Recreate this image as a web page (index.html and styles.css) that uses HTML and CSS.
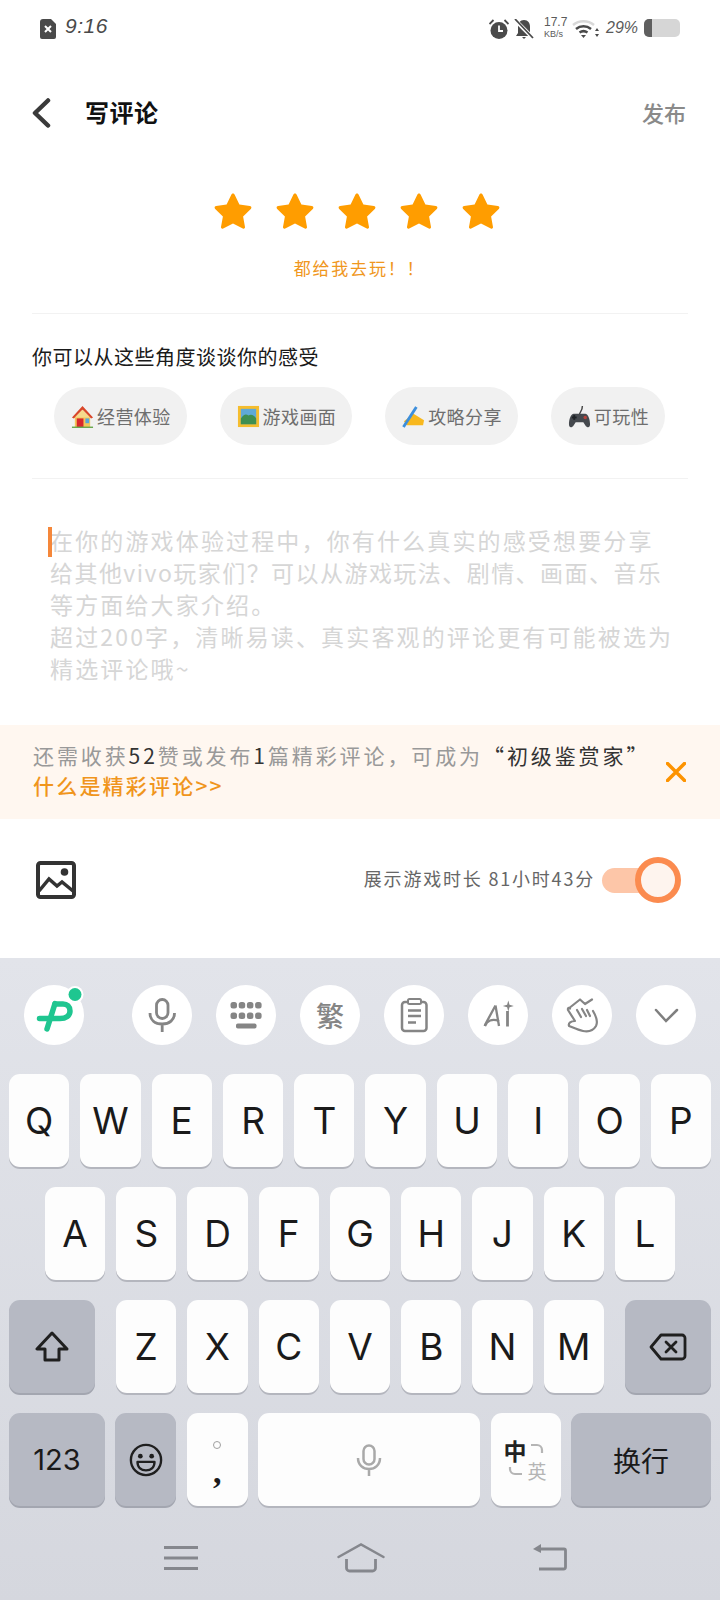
FILE: index.html
```html
<!DOCTYPE html>
<html lang="zh-CN">
<head>
<meta charset="utf-8">
<title>写评论</title>
<link rel="stylesheet" href="styles.css">
</head>
<body>
<div class="app">
  <div class="status">
    <svg class="st-file" viewBox="0 0 16 20"><path d="M3 0h8l5 5v13a2 2 0 0 1-2 2H2a2 2 0 0 1-2-2V3a3 3 0 0 1 3-3z" fill="#4a4a4a"/><path d="M5 7l6 6M11 7l-6 6" stroke="#fff" stroke-width="2"/></svg>
    <span class="time">9:16</span>
    <span class="st-fill"></span>
    <svg class="st-ic" viewBox="0 0 20 20"><circle cx="10" cy="11.5" r="8.5" fill="#4a4a4a"/><path d="M10 6.5v5.5h4" stroke="#fff" stroke-width="1.8" fill="none"/><path d="M0.5 5L4.5 1M19.5 5L15.5 1" stroke="#4a4a4a" stroke-width="1.8"/></svg>
    <svg class="st-ic st-bell" viewBox="0 0 20 20"><path d="M10 1c4 0 6 3 6 7v6l2 3H2l2-3V8c0-4 2-7 6-7z" fill="#4a4a4a"/><path d="M8 18h4l-2 2z" fill="#4a4a4a"/><path d="M1 1l18 18" stroke="#fff" stroke-width="4"/><path d="M1 0l18 19" stroke="#4a4a4a" stroke-width="1.8"/></svg>
    <span class="speed"><span>17.7</span><span class="speed-u">KB/s</span></span>
    <svg class="st-wifi" viewBox="0 0 27 20"><path d="M1 7a17 17 0 0 1 21 0" stroke="#d8d8d8" stroke-width="2.5" fill="none"/><path d="M4 11a12 12 0 0 1 15 0M7.500 14.500a7 7 0 0 1 8 0" stroke="#4a4a4a" stroke-width="2.5" fill="none"/><path d="M9 17h5l-2.500 3z" fill="#4a4a4a"/><path d="M25 10l-2 3h4zM25 19l-2-3h4z" fill="#4a4a4a"/></svg>
    <span class="pct">29%</span>
    <span class="batt"><span class="batt-lv"></span></span>
  </div>

  <div class="head">
    <svg class="back" viewBox="0 0 20 30"><path d="M17 2.500L4 15l13 12.500" fill="none" stroke="#3a3a3a" stroke-width="4.500" stroke-linecap="round" stroke-linejoin="round"/></svg>
    <span class="head-title">写评论</span>
    <span class="head-pub">发布</span>
  </div>

  <div class="stars">
    <svg class="star" viewBox="0 0 38 37"><path d="M19 1.500c.8 0 1.300.5 1.700 1.300l4.700 9.700 10.500 1.500c1.500.2 2 1.900.9 2.900l-7.700 7.500 1.900 10.600c.2 1.300-1 2.100-2.200 1.500L19 31.500 9.200 36.500c-1.200.6-2.400-.2-2.200-1.500l1.900-10.600L1.200 16.900C.1 15.900.6 14.200 2.100 14l10.500-1.500 4.700-9.700c.4-.8.900-1.300 1.700-1.300z"/></svg>
    <svg class="star" viewBox="0 0 38 37"><path d="M19 1.500c.8 0 1.300.5 1.700 1.300l4.700 9.700 10.500 1.500c1.500.2 2 1.900.9 2.900l-7.700 7.500 1.900 10.600c.2 1.300-1 2.100-2.200 1.500L19 31.500 9.200 36.500c-1.200.6-2.400-.2-2.200-1.500l1.900-10.600L1.200 16.900C.1 15.900.6 14.200 2.100 14l10.500-1.500 4.700-9.700c.4-.8.900-1.300 1.700-1.300z"/></svg>
    <svg class="star" viewBox="0 0 38 37"><path d="M19 1.500c.8 0 1.300.5 1.700 1.300l4.700 9.700 10.500 1.500c1.500.2 2 1.900.9 2.900l-7.700 7.500 1.900 10.600c.2 1.300-1 2.100-2.200 1.500L19 31.500 9.200 36.500c-1.200.6-2.400-.2-2.200-1.500l1.900-10.600L1.200 16.900C.1 15.900.6 14.200 2.100 14l10.500-1.500 4.700-9.700c.4-.8.900-1.300 1.700-1.300z"/></svg>
    <svg class="star" viewBox="0 0 38 37"><path d="M19 1.500c.8 0 1.300.5 1.700 1.300l4.700 9.700 10.500 1.500c1.500.2 2 1.900.9 2.900l-7.700 7.500 1.900 10.600c.2 1.300-1 2.100-2.200 1.500L19 31.500 9.200 36.500c-1.200.6-2.400-.2-2.200-1.500l1.900-10.600L1.200 16.900C.1 15.900.6 14.200 2.100 14l10.500-1.500 4.700-9.700c.4-.8.900-1.300 1.700-1.300z"/></svg>
    <svg class="star" viewBox="0 0 38 37"><path d="M19 1.500c.8 0 1.300.5 1.700 1.300l4.700 9.700 10.500 1.500c1.500.2 2 1.900.9 2.900l-7.700 7.500 1.900 10.600c.2 1.300-1 2.100-2.200 1.500L19 31.500 9.200 36.500c-1.200.6-2.400-.2-2.200-1.500l1.900-10.600L1.200 16.900C.1 15.900.6 14.200 2.100 14l10.500-1.500 4.700-9.700c.4-.8.900-1.300 1.700-1.300z"/></svg>
  </div>
  <div class="rate-label">都给我去玩！！</div>
  <div class="rule rule-a"></div>
  <div class="prompt">你可以从这些角度谈谈你的感受</div>
  <div class="chips">
    <div class="chip">
      <svg class="emo" viewBox="0 0 24 24"><rect x="4" y="11" width="16" height="12" fill="#f4c65a"/><path d="M12 1L1 13l2 1 9-9 9 9 2-1z" fill="#d9472a"/><path d="M12 5l-8 8h16z" fill="#f6d98c"/><rect x="6" y="14" width="7" height="9" fill="#d8262c"/><rect x="15" y="14" width="4" height="5" fill="#5aa6d8"/><rect x="1" y="22.500" width="22" height="1.500" fill="#6aa84f"/></svg>
      <span>经营体验</span>
    </div>
    <div class="chip">
      <svg class="emo" viewBox="0 0 24 24"><rect x="1" y="1" width="22" height="22" fill="#f5bd2e"/><rect x="4" y="4" width="16" height="16" fill="#5fa9d8"/><path d="M4 20v-6c3-4 5-5 8-3 3-2 6 0 8 3v6z" fill="#3f8f52"/></svg>
      <span>游戏画面</span>
    </div>
    <div class="chip">
      <svg class="emo" viewBox="0 0 24 24"><path d="M2 17L12 9l11 7-1 5H5z" fill="#f8b81e"/><path d="M1.500 23L15 2" stroke="#3d8fdc" stroke-width="3"/></svg>
      <span>攻略分享</span>
    </div>
    <div class="chip">
      <svg class="emo" viewBox="0 0 24 24"><path d="M12 10c0-3 3-3 3-9" stroke="#444" stroke-width="1.500" fill="none"/><path d="M6 9h12c3 0 5 6 5 11 0 4-3 4-5 1l-2-3H8l-2 3c-2 3-5 3-5-1 0-5 2-11 5-11z" fill="#45494e"/><circle cx="18" cy="13" r="1.800" fill="#b8443c"/><rect x="4" y="12" width="5" height="2" fill="#1e2226"/><rect x="5.500" y="10.500" width="2" height="5" fill="#1e2226"/></svg>
      <span>可玩性</span>
    </div>
  </div>
  <div class="rule rule-b"></div>

  <div class="editor">
    <span class="caret"></span>在你的游戏体验过程中，你有什么真实的感受想要分享<br>
    <span class="ed-tight">给其他vivo玩家们？可以从游戏玩法、剧情、画面、音乐</span><br>
    等方面给大家介绍。<br>
    超过200字，清晰易读、真实客观的评论更有可能被选为<br>
    精选评论哦~
  </div>

  <div class="banner">
    <div class="banner-text">
      <div>还需收获<b class="dk">52</b>赞或发布<b class="dk">1</b>篇精彩评论，可成为<b class="dk">“初级鉴赏家”</b></div>
      <div class="banner-link">什么是精彩评论&gt;&gt;</div>
    </div>
    <svg class="banner-x" viewBox="0 0 20 20"><path d="M1.500 1.500l17 17M18.500 1.500l-17 17" stroke="#fd9300" stroke-width="3.500" stroke-linecap="round"/></svg>
  </div>

  <div class="tools">
    <svg class="pic" viewBox="0 0 40 38"><rect x="2" y="2" width="36" height="34" rx="2.500" fill="none" stroke="#333" stroke-width="4"/><path d="M3 30l10-12 8 7 5-4 11 9" fill="none" stroke="#333" stroke-width="3.500"/><circle cx="28.500" cy="11" r="3.800" fill="#333"/></svg>
    <span class="show">展示游戏时长 81小时43分</span>
    <span class="toggle"><span class="knob"></span></span>
  </div>

  <div class="kb">
    <div class="tb">
      <div class="tb-btn tb-logo">
        <svg class="tb-svg" viewBox="0 0 60 60"><path d="M15.500 33.500H36c6 0 10-3 10-7.500 0-4.500-3-7-7-7h-8" fill="none" stroke="#1fc690" stroke-width="5.500" stroke-linecap="round"/><path d="M31 18.500L23 44" stroke="#1fc690" stroke-width="5.500" stroke-linecap="round"/><circle cx="51" cy="9.500" r="8.500" fill="#fff"/><circle cx="51" cy="9.500" r="6.500" fill="#1fc690"/></svg>
      </div>
      <div class="tb-btn">
        <svg class="tb-svg" viewBox="0 0 60 60"><rect x="24.500" y="14.500" width="11.500" height="19" rx="5.700" fill="none" stroke="#858585" stroke-width="2.800"/><path d="M18 28c0 7 5 11 12.200 11s12.300-4 12.300-11M30.200 39v8" fill="none" stroke="#858585" stroke-width="2.800"/></svg>
      </div>
      <div class="tb-btn">
        <svg class="tb-svg" viewBox="0 0 60 60"><g fill="#858585"><rect x="14.500" y="17" width="6.500" height="6.500" rx="2.500"/><rect x="22.700" y="17" width="6.500" height="6.500" rx="2.500"/><rect x="30.900" y="17" width="6.500" height="6.500" rx="2.500"/><rect x="39.100" y="17" width="6.500" height="6.500" rx="2.500"/><rect x="14.500" y="27.500" width="6.500" height="6.500" rx="2.500"/><rect x="22.700" y="27.500" width="6.500" height="6.500" rx="2.500"/><rect x="30.900" y="27.500" width="6.500" height="6.500" rx="2.500"/><rect x="39.100" y="27.500" width="6.500" height="6.500" rx="2.500"/><rect x="20" y="38.500" width="20.500" height="5" rx="1.800"/></g></svg>
      </div>
      <div class="tb-btn tb-txt">繁</div>
      <div class="tb-btn">
        <svg class="tb-svg" viewBox="0 0 60 60"><rect x="18" y="17" width="24.500" height="29" rx="3" fill="none" stroke="#858585" stroke-width="2.500"/><rect x="24" y="14" width="13" height="5" rx="1.500" fill="#fff" stroke="#858585" stroke-width="2"/><path d="M24 25.500h13M24 31h13M24 37.500h8" stroke="#858585" stroke-width="2.500"/></svg>
      </div>
      <div class="tb-btn">
        <svg class="tb-svg" viewBox="0 0 60 60"><path d="M27.500 20.500L18 38c-.6 1-1 2-1.300 3M27.500 20.500L31 41" fill="none" stroke="#858585" stroke-width="2.300"/><path d="M17 41c2-5 7-8 14-5" fill="none" stroke="#858585" stroke-width="2.300"/><path d="M39.500 26v15.500" stroke="#858585" stroke-width="2.800"/><path d="M40.300 15.500l1.200 4.300 4.300 1.200-4.300 1.200-1.200 4.300-1.200-4.300-4.300-1.200 4.300-1.200z" fill="#858585"/></svg>
      </div>
      <div class="tb-btn">
        <svg class="tb-svg" viewBox="0 0 60 60"><path d="M16 24L28 14.500 33 19 40 14.500M41 26c3 5 5 11 3 15-3 5-8 6-13 5-5-1-9-3-14-5-1-3 2-5 6-5L16 25c-.5-2 1-3 2-1.500M25 25l4 7M30 24l4 7M35 25l3 6" fill="none" stroke="#858585" stroke-width="2.200" stroke-linecap="round" stroke-linejoin="round"/></svg>
      </div>
      <div class="tb-btn">
        <svg class="tb-svg" viewBox="0 0 60 60"><path d="M20 25l10 11 11-11" fill="none" stroke="#7f7f7f" stroke-width="2.500" stroke-linecap="round"/></svg>
      </div>
    </div>

    <div class="row row-1">
      <div class="key">Q</div><div class="key">W</div><div class="key">E</div><div class="key">R</div><div class="key">T</div><div class="key">Y</div><div class="key">U</div><div class="key">I</div><div class="key">O</div><div class="key">P</div>
    </div>
    <div class="row row-2">
      <div class="key">A</div><div class="key">S</div><div class="key">D</div><div class="key">F</div><div class="key">G</div><div class="key">H</div><div class="key">J</div><div class="key">K</div><div class="key">L</div>
    </div>
    <div class="row row-3">
      <div class="key dark k-shift">
        <svg class="k-ic" viewBox="0 0 34 34"><path d="M17 3L2 19h8v11h14V19h8z" fill="none" stroke="#1f1f1f" stroke-width="3" stroke-linejoin="round"/></svg>
      </div>
      <div class="key-group">
        <div class="key">Z</div><div class="key">X</div><div class="key">C</div><div class="key">V</div><div class="key">B</div><div class="key">N</div><div class="key">M</div>
      </div>
      <div class="key dark k-del">
        <svg class="k-del-ic" viewBox="0 0 38 28"><path d="M12 2h21a3 3 0 0 1 3 3v18a3 3 0 0 1-3 3H12L2 14z" fill="none" stroke="#1f1f1f" stroke-width="2.800" stroke-linejoin="round"/><path d="M17 9l10 10M27 9L17 19" stroke="#1f1f1f" stroke-width="2.800" stroke-linecap="round"/></svg>
      </div>
    </div>
    <div class="row row-4">
      <div class="key dark k-123">123</div>
      <div class="key dark k-emo">
        <svg class="k-ic" viewBox="0 0 36 36"><circle cx="18" cy="18" r="16" fill="none" stroke="#1f1f1f" stroke-width="2.500"/><circle cx="12" cy="14" r="2.500" fill="#1f1f1f"/><circle cx="24" cy="14" r="2.500" fill="#1f1f1f"/><path d="M9 20h18c0 6-4 9-9 9s-9-3-9-9z" fill="none" stroke="#1f1f1f" stroke-width="2.500" stroke-linejoin="round"/></svg>
      </div>
      <div class="key k-comma"><span class="k-dot"></span><span class="k-cm">,</span></div>
      <div class="key k-space">
        <svg class="k-mic" viewBox="0 0 26 32"><rect x="7.500" y="1.500" width="11" height="19" rx="5.500" fill="none" stroke="#a9a9a9" stroke-width="2.500"/><path d="M2 14c0 7 5 11 11 11s11-4 11-11M13 25v7" fill="none" stroke="#a9a9a9" stroke-width="2.500"/></svg>
      </div>
      <div class="key k-lang">
        <span class="l-zh">中</span>
        <span class="l-en">英</span>
        <svg class="l-arrows" viewBox="0 0 70 93"><path d="M40 32h6a5 5 0 0 1 5 5v3M19 54v2a5 5 0 0 0 5 5h7" fill="none" stroke="#b5b5b5" stroke-width="2.200"/></svg>
      </div>
      <div class="key dark k-enter">换行</div>
    </div>

    <div class="nav">
      <svg class="nav-menu" viewBox="0 0 34 24"><path d="M0 1.500h34M0 12h34M0 22.500h34" stroke="#85878d" stroke-width="2.800"/></svg>
      <svg class="nav-home" viewBox="0 0 48 30"><path d="M1.500 14L24 1.500 46.500 14" fill="none" stroke="#85878d" stroke-width="2.500" stroke-linecap="round"/><path d="M9.500 16v9a3 3 0 0 0 3 3h23a3 3 0 0 0 3-3v-9" fill="none" stroke="#85878d" stroke-width="2.800"/></svg>
      <svg class="nav-back" viewBox="0 0 34 27"><path d="M5 5h26a1.500 1.500 0 0 1 1.500 1.500V23a2 2 0 0 1-2 2H6" fill="none" stroke="#85878d" stroke-width="2.800"/><path d="M0 5l8-5v9z" fill="#85878d"/></svg>
    </div>
  </div>
</div>
</body>
</html>
```

FILE: styles.css
```css
* { box-sizing: border-box; }
html, body { margin: 0; padding: 0; }
body {
  width: 720px;
  height: 1600px;
  overflow: hidden;
  background: #fff;
  font-family: "Noto Sans CJK SC", "Noto Sans", sans-serif;
}
.app { display: flex; flex-direction: column; height: 1600px; }

/* status bar */
.status { height: 56px; display: flex; align-items: center; padding: 0 40px; color: #4a4a4a; flex: none; }
.st-file { width: 16px; height: 20px; margin-top: 1px; }
.time { margin-left: 9px; font: italic 21px "Liberation Sans", sans-serif; letter-spacing: 0.5px; margin-top: -4px; }
.st-fill { flex: 1; }
.st-ic { width: 20px; height: 20px; margin-top: 1px; margin-right: 1px; }
.st-bell { margin-left: 4px; }
.speed { display: flex; flex-direction: column; align-items: flex-start; width: 20px; margin-left: 9px; font: 12px/12px "Liberation Sans", sans-serif; color: #5a5a5a; }
.speed-u { font-size: 9px; }
.st-wifi { width: 27px; height: 20px; margin-left: 8px; }
.pct { width: 32px; margin-left: 7px; font: italic 16px "Liberation Sans", sans-serif; color: #5a5a5a; white-space: nowrap; }
.batt { width: 36px; height: 18px; margin-left: 6px; background: #d6d6d6; border-radius: 5px; display: block; overflow: hidden; }
.batt-lv { display: block; width: 8px; height: 18px; background: #5f5f5f; }

/* header */
.head { height: 114px; flex: none; display: flex; align-items: center; padding: 0 34px 0 31px; }
.back { width: 20px; height: 30px; }
.head-title { margin: 0 0 4px 34px; font-size: 24px; font-weight: 700; color: #111; letter-spacing: 0.5px; }
.head-pub { margin: 0 0 3px auto; font-size: 22px; color: #8a8a8a; font-weight: 500; }

/* rating */
.stars { display: flex; justify-content: center; gap: 24px; margin-top: 22px; flex: none; padding-right: 6px; }
.star { width: 38px; height: 37px; fill: #ff9d00; }
.rate-label { margin-top: 25px; height: 28px; line-height: 28px; font-size: 17px; text-align: center; color: #f0971e; letter-spacing: 1.800px; flex: none; padding-right: 1px; }
.rule { height: 1px; background: #f2f2f2; margin: 0 32px; flex: none; }
.rule-a { margin-top: 31px; }
.prompt { margin: 29px 0 1px 32px; height: 28px; line-height: 28px; font-size: 20px; letter-spacing: 0.5px; color: #1a1a1a; flex: none; }
.chips { display: flex; gap: 33px; padding-left: 54px; margin-top: 15px; flex: none; }
.chip { height: 58px; border-radius: 29px; background: #f1f1f1; display: flex; align-items: center; padding: 0 16px 0 17px; font-size: 18px; letter-spacing: 0.4px; color: #6e6e6e; white-space: nowrap; }
.emo { width: 23px; height: 23px; margin-right: 3px; flex: none; }
.rule-b { margin-top: 33px; }

/* editor */
.editor { position: relative; margin: 45px 0 2px 50px; height: 199px; font-size: 23px; line-height: 32px; letter-spacing: 2.150px; color: #d6d6d6; white-space: nowrap; flex: none; }
.ed-tight { letter-spacing: 1.450px; }
.caret { position: absolute; left: -2px; top: 3px; width: 4px; height: 30px; background: #f5873a; }

/* banner */
.banner { height: 94px; background: #fff7f0; flex: none; display: flex; align-items: center; padding: 0 34px 0 33px; font-size: 21px; color: #999; }
.banner-text { line-height: 30px; white-space: nowrap; letter-spacing: 2.900px; margin-bottom: 4px; }
.dk { font-weight: 400; color: #333; }
.banner-link { color: #f0951c; font-weight: 500; letter-spacing: 2.200px; }
.banner-x { width: 20px; height: 20px; margin-left: auto; }

/* tools */
.tools { height: 139px; padding: 0 39px 17px 36px; flex: none; display: flex; align-items: center; }
.pic { width: 40px; height: 38px; }
.show { margin: 0 0 4px auto; font-size: 18px; color: #666; letter-spacing: 1.800px; white-space: nowrap; }
.toggle { position: relative; width: 48px; height: 25px; border-radius: 13px; background: #fdc6a8; margin-left: 7px; margin-right: 31px; flex: none; }
.knob { position: absolute; left: 33px; top: -11px; width: 46px; height: 46px; border-radius: 50%; border: 6px solid #fb8b4f; background: #fef4ee; }

/* keyboard */
.kb { flex: 1; background: linear-gradient(#e2e4ea, #d5d7de); padding-top: 27px; min-height: 0; }
.tb { display: flex; gap: 24px; padding-left: 24px; }
.tb-btn { width: 60px; height: 60px; border-radius: 50%; background: #fff; flex: none; position: relative; }
.tb-logo { margin-right: 24px; }
.tb-svg { width: 60px; height: 60px; display: block; }
.tb-txt { display: flex; align-items: center; justify-content: center; font-size: 28px; font-weight: 500; color: #858585; }
.tb-logo .tb-svg { overflow: visible; }

.row { display: flex; gap: 11px; height: 93px; margin-top: 20px; }
.tb + .row { margin-top: 29px; }
.row-1 { padding: 0 9px; }
.row-2 { padding: 0 45px; }
.row-3 { padding: 0 9px; }
.row-4 { padding: 0 9px; gap: 10.400px; }
.key-group { display: flex; gap: 11px; flex: 1; margin: 0 10px; }
.key {
  flex: 1;
  display: flex;
  align-items: center;
  justify-content: center;
  background: #fdfdfd;
  border-radius: 11px;
  box-shadow: 0 2px 0 #b4b6be;
  font: 400 37px "Inter", "Noto Sans", sans-serif;
  color: #1a1a1a;
}
.dark { background: #b6b9c3; box-shadow: 0 2px 0 #a3a6b0; }
.k-shift { flex: none; width: 86px; }
.k-del { flex: none; width: 86px; }
.k-ic { width: 34px; height: 34px; }
.k-del-ic { width: 38px; height: 28px; }
.k-123 { flex: none; width: 96px; font-size: 29px; }
.k-emo { flex: none; width: 61px; }
.k-comma { flex: none; width: 61px; flex-direction: column; gap: 12px; padding-top: 4px; }
.k-dot { width: 8px; height: 8px; border: 1.500px solid #a0a0a0; border-radius: 50%; }
.k-cm { font: 700 34px/22px "Liberation Serif", serif; height: 22px; }
.k-space { flex: none; width: 222px; }
.k-mic { width: 26px; height: 32px; }
.k-lang { flex: none; width: 70px; position: relative; font-family: "Noto Sans CJK SC", sans-serif; }
.l-zh { position: absolute; left: 13px; top: 25px; font-size: 23px; line-height: 24px; font-weight: 700; color: #222; }
.l-en { position: absolute; left: 37px; top: 48px; font-size: 19px; line-height: 20px; color: #b5b5b5; }
.l-arrows { position: absolute; left: 0; top: 0; width: 70px; height: 93px; }
.k-enter { flex: none; width: 140px; font: 400 28px "Noto Sans CJK SC", sans-serif; }

.nav { display: flex; align-items: flex-start; padding: 37px 0 0 164px; }
.nav-menu { width: 34px; height: 24px; margin-top: 3px; }
.nav-home { width: 48px; height: 30px; margin-left: 139px; }
.nav-back { width: 34px; height: 27px; margin-left: 148px; margin-top: 1px; }
```
